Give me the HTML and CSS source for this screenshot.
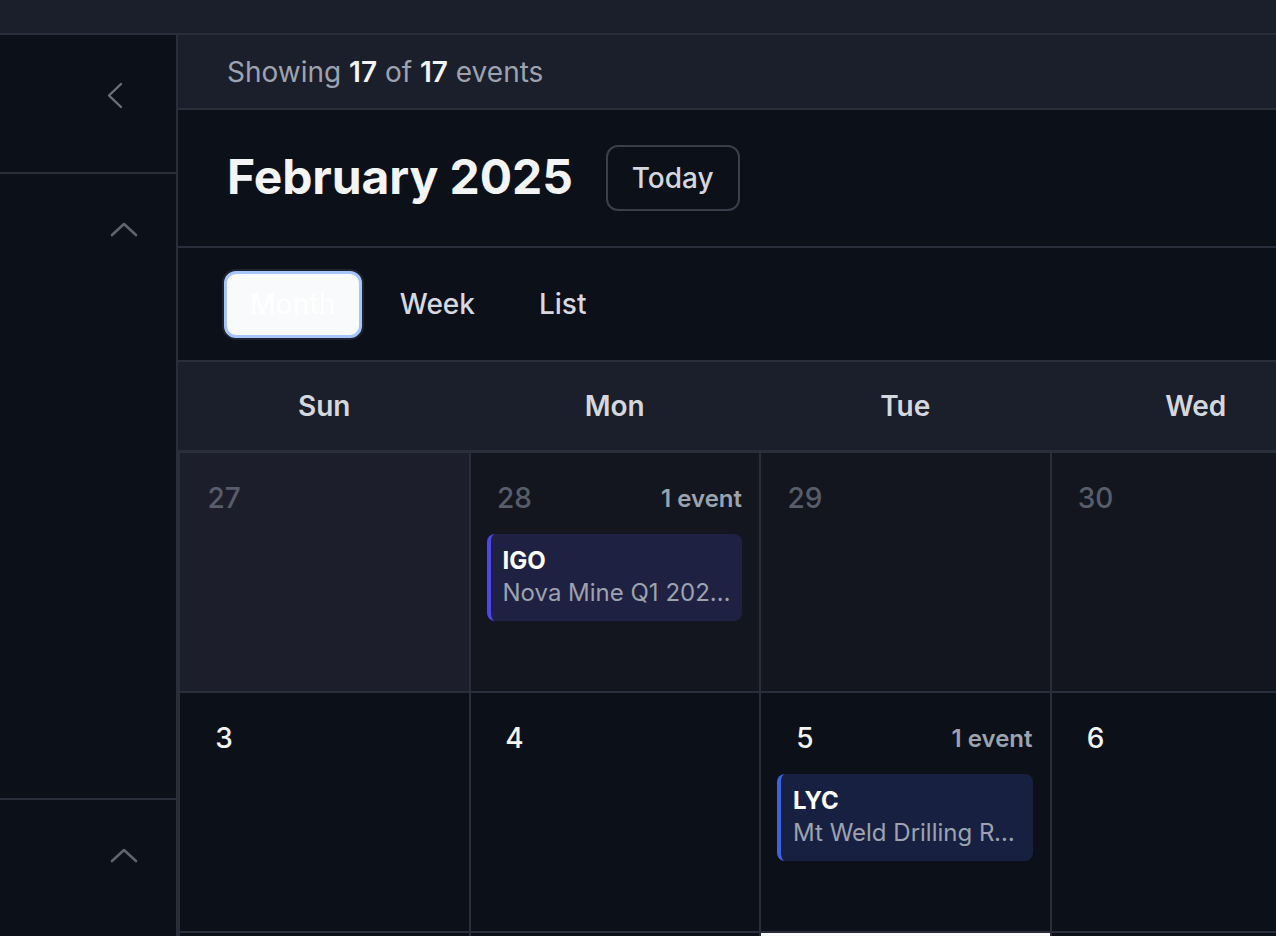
FILE: index.html
```html
<!DOCTYPE html>
<html lang="en">
<head>
<meta charset="utf-8">
<title>Calendar</title>
<link rel="stylesheet" href="styles.css">
</head>
<body>
<div class="topbar"></div>
<div class="layout">
  <aside class="sidebar">
    <div class="side-sec side-sec-1">
      <svg class="chev-left" width="18" height="27" viewBox="0 0 18 27"><polyline points="15,2 3,13.5 15,25" fill="none" stroke="#6b7080" stroke-width="2.4" stroke-linecap="round" stroke-linejoin="round"/></svg>
    </div>
    <div class="side-sec side-sec-2">
      <svg class="chev-up" width="28" height="18" viewBox="0 0 28 18"><polyline points="2,15 14,4 26,15" fill="none" stroke="#5f6471" stroke-width="2.6" stroke-linecap="round" stroke-linejoin="round"/></svg>
    </div>
    <div class="side-sec side-sec-3">
      <svg class="chev-up" width="28" height="18" viewBox="0 0 28 18"><polyline points="2,15 14,4 26,15" fill="none" stroke="#5f6471" stroke-width="2.6" stroke-linecap="round" stroke-linejoin="round"/></svg>
    </div>
  </aside>
  <main class="main">
    <div class="summary"><span>Showing <b>17</b> of <b>17</b> events</span></div>
    <div class="header">
      <h1 class="title">February 2025</h1>
      <button class="today-btn">Today</button>
    </div>
    <div class="tabs">
      <button class="tab tab-active">Month</button>
      <button class="tab">Week</button>
      <button class="tab">List</button>
    </div>
    <div class="dow">
      <div class="dow-cell">Sun</div>
      <div class="dow-cell">Mon</div>
      <div class="dow-cell">Tue</div>
      <div class="dow-cell">Wed</div>
      <div class="dow-cell">Thu</div>
      <div class="dow-cell">Fri</div>
      <div class="dow-cell">Sat</div>
    </div>
    <div class="grid">
      <div class="cell cell-out cell-hover">
        <div class="cell-head"><span class="date">27</span></div>
      </div>
      <div class="cell cell-out">
        <div class="cell-head"><span class="date">28</span><span class="count">1 event</span></div>
        <div class="event event-indigo">
          <div class="event-code">IGO</div>
          <div class="event-name">Nova Mine Q1 2025 Production Update</div>
        </div>
      </div>
      <div class="cell cell-out">
        <div class="cell-head"><span class="date">29</span></div>
      </div>
      <div class="cell cell-out">
        <div class="cell-head"><span class="date">30</span></div>
      </div>
      <div class="cell cell-out">
        <div class="cell-head"><span class="date">31</span></div>
      </div>
      <div class="cell">
        <div class="cell-head"><span class="date date-in">1</span></div>
      </div>
      <div class="cell">
        <div class="cell-head"><span class="date date-in">2</span></div>
      </div>

      <div class="cell">
        <div class="cell-head"><span class="date date-in">3</span></div>
      </div>
      <div class="cell">
        <div class="cell-head"><span class="date date-in">4</span></div>
      </div>
      <div class="cell">
        <div class="cell-head"><span class="date date-in">5</span><span class="count">1 event</span></div>
        <div class="event event-blue">
          <div class="event-code">LYC</div>
          <div class="event-name">Mt Weld Drilling Results Announcement</div>
        </div>
      </div>
      <div class="cell">
        <div class="cell-head"><span class="date date-in">6</span></div>
      </div>
      <div class="cell">
        <div class="cell-head"><span class="date date-in">7</span></div>
      </div>
      <div class="cell">
        <div class="cell-head"><span class="date date-in">8</span></div>
      </div>
      <div class="cell">
        <div class="cell-head"><span class="date date-in">9</span></div>
      </div>

      <div class="cell"></div>
      <div class="cell"></div>
      <div class="cell cell-today"></div>
      <div class="cell"></div>
      <div class="cell"></div>
      <div class="cell"></div>
      <div class="cell"></div>
    </div>
  </main>
</div>
</body>
</html>
```

FILE: styles.css
```css
* { box-sizing: border-box; }

html, body {
  margin: 0;
  padding: 0;
  height: 936px;
  overflow: hidden;
  background: #0c1018;
  font-family: Inter, "Noto Sans", "Liberation Sans", sans-serif;
  color: #f3f4f6;
}

.topbar {
  height: 35px;
  background: #1b1f2b;
  border-bottom: 2px solid #2a2e3a;
}

.layout {
  display: flex;
  height: 901px;
}

.sidebar {
  width: 178px;
  flex: none;
  background: #0c1018;
  border-right: 2px solid #2a2e3a;
  display: flex;
  flex-direction: column;
}

.side-sec {
  display: flex;
  justify-content: flex-end;
  align-items: flex-start;
}

.side-sec-1 {
  height: 139px;
  padding: 47px 52px 0 0;
  border-bottom: 2px solid #2a2e3a;
}

.side-sec-2 {
  height: 626px;
  padding: 46px 38px 0 0;
  border-bottom: 2px solid #2a2e3a;
}

.side-sec-3 {
  flex: 1;
  padding: 46px 38px 0 0;
}

.main {
  flex: 1;
  min-width: 0;
  overflow: hidden;
}

.summary {
  height: 75px;
  display: flex;
  align-items: center;
  padding-left: 49px;
  background: #1b1f2b;
  border-bottom: 2px solid #2a2e3a;
  font-size: 28px;
  color: #9ca3af;
}

.summary b {
  color: #f3f4f6;
  font-weight: 600;
}

.header {
  height: 138px;
  display: flex;
  align-items: center;
  gap: 33px;
  padding-left: 49px;
  padding-bottom: 3px;
  border-bottom: 2px solid #2a2e3a;
}

.title {
  margin: 0;
  font-size: 48px;
  font-weight: 700;
  letter-spacing: -0.1px;
  color: #f3f4f6;
}

.today-btn {
  height: 66px;
  margin-top: 3px;
  padding: 0 24px;
  background: transparent;
  border: 2px solid #3a3f4c;
  border-radius: 12px;
  font-family: inherit;
  font-size: 28px;
  font-weight: 500;
  color: #d4d7de;
}

.tabs {
  height: 114px;
  display: flex;
  align-items: center;
  gap: 12px;
  padding-left: 46px;
  border-bottom: 2px solid #2a2e3a;
}

.tab {
  height: 67px;
  padding: 0 23px;
  background: transparent;
  border: 3px solid transparent;
  border-radius: 12px;
  font-family: inherit;
  font-size: 28px;
  font-weight: 500;
  color: #d6d9e0;
}

.tab-active {
  background: #f8fafc;
  border-color: #a6c5fa;
  color: #ffffff;
  box-shadow: 0 0 0 2px #1f2330;
}

.dow {
  height: 91px;
  display: grid;
  grid-template-columns: repeat(7, 288.5px);
  column-gap: 2px;
  padding-left: 2px;
  background: #1b1f2b;
  border-bottom: 3px solid #2a2e3a;
}

.dow-cell {
  display: flex;
  align-items: center;
  justify-content: center;
  font-size: 28px;
  font-weight: 600;
  color: #d4d7de;
}

.grid {
  display: grid;
  grid-template-columns: repeat(7, 288.5px);
  grid-auto-rows: 238px;
  gap: 2px;
  border-left: 2px solid #2a2e3a;
  background: #2a2e3a;
}

.cell {
  background: #0c1018;
  padding: 17px 17px 16px 16px;
  min-width: 0;
}

.cell-out {
  background: #13161f;
}

.cell-hover {
  background: #1c1f2b;
}

.cell-today {
  background: #f8fafc;
}

.cell-head {
  display: flex;
  align-items: center;
  justify-content: space-between;
  height: 56px;
}

.date {
  width: 56px;
  text-align: center;
  font-size: 28px;
  font-weight: 500;
  color: #575d6a;
}

.date-in {
  color: #f3f4f6;
  font-weight: 500;
}

.count {
  font-size: 24px;
  font-weight: 600;
  color: #9ca3af;
}

.event {
  margin-top: 8px;
  height: 87px;
  padding: 12px 6px 0 12px;
  border-radius: 8px;
  border-left: 4px solid #4f46e5;
  overflow: hidden;
}

.event-indigo {
  background: #1f2143;
  border-left-color: #4f46e5;
}

.event-blue {
  background: #182042;
  border-left-color: #3b63e2;
}

.event-code {
  font-size: 24px;
  font-weight: 700;
  line-height: 30px;
  color: #ffffff;
}

.event-name {
  font-size: 24px;
  line-height: 34px;
  color: #9ca3af;
  white-space: nowrap;
  overflow: hidden;
  text-overflow: ellipsis;
}
```
